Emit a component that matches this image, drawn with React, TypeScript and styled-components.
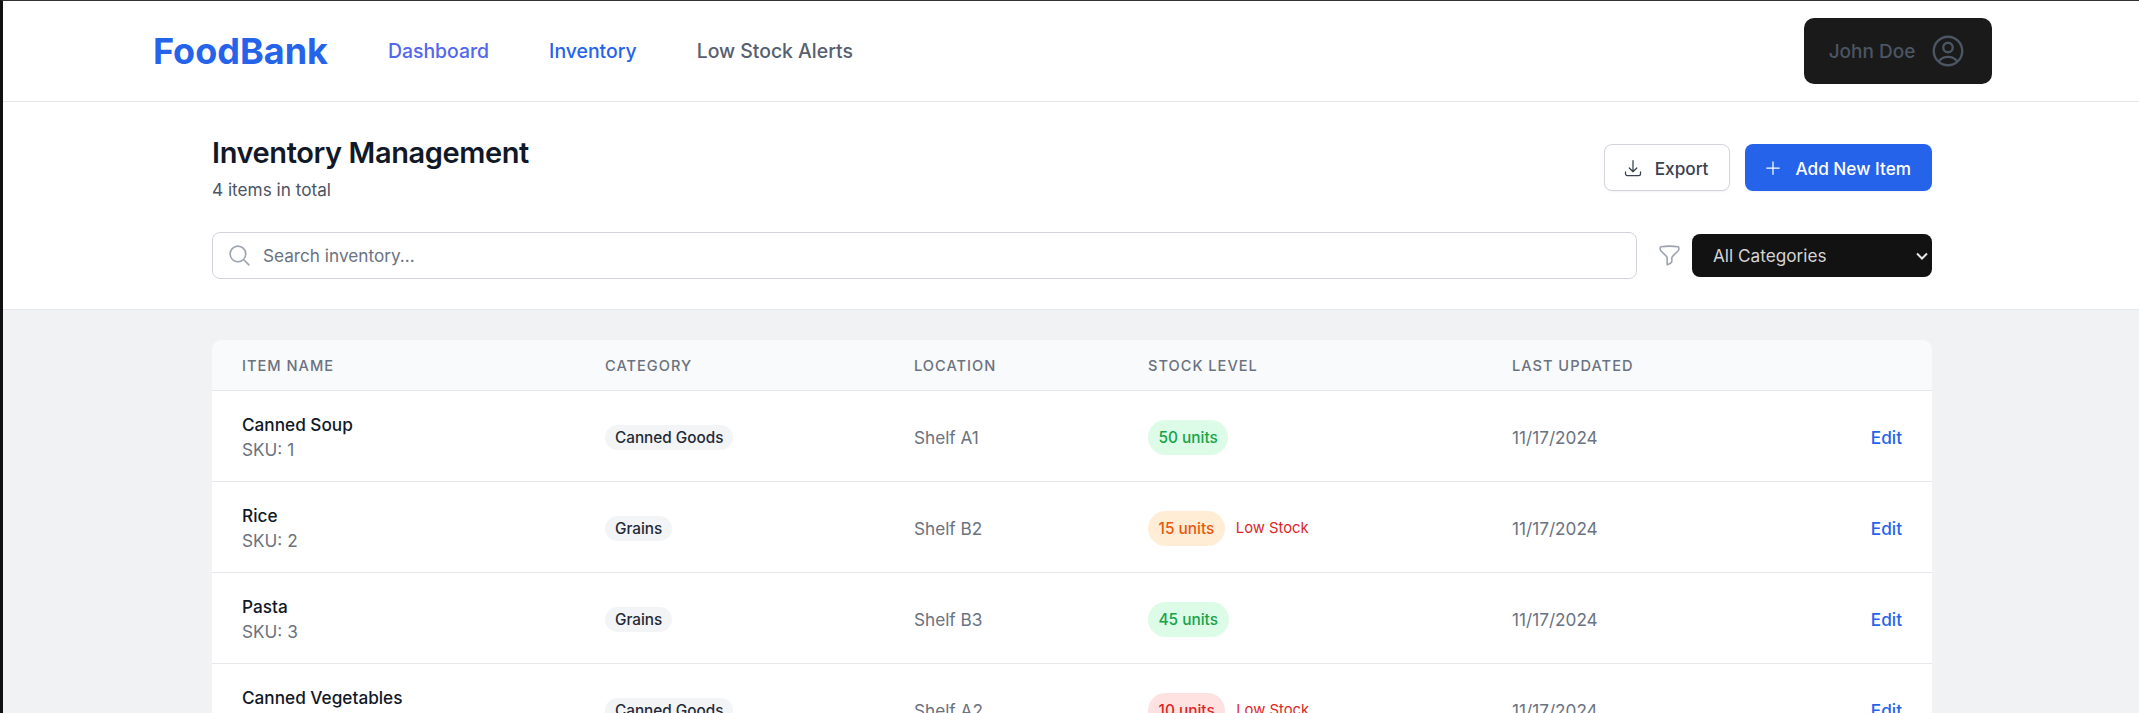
import React from 'react';
import styled, { createGlobalStyle } from 'styled-components';
import {
	HiOutlineArrowDownTray,
	HiOutlineFunnel,
	HiOutlineMagnifyingGlass,
	HiOutlinePlus,
	HiOutlineUserCircle,
} from 'react-icons/hi2';

const GlobalStyle = createGlobalStyle`
	html, body {
		margin: 0;
		height: 100%;
		overflow: hidden;
		background: #f1f2f4;
		font-family: Inter, "Liberation Sans", sans-serif;
	}
	* { box-sizing: border-box; }
`;

const Page = styled.div`
	height: 713px;
	overflow: hidden;
	border-top: 1px solid #333;
	border-left: 3px solid #111;
	background: #f1f2f4;
`;

const NavBar = styled.header`
	height: 101px;
	display: flex;
	align-items: center;
	padding: 0 147px 0 150px;
	background: #fff;
	border-bottom: 1px solid #e5e7eb;
`;

const Logo = styled.div`
	font-size: 36px;
	font-weight: 700;
	color: #2563eb;
	margin-right: 60px;
`;

const NavLinks = styled.nav`
	display: flex;
	gap: 60px;
	flex: 1;
`;

const NavLink = styled.a<{ $tone: string }>`
	font-size: 19.4px;
	font-weight: 500;
	color: ${p => p.$tone};
`;

const UserButton = styled.button`
	width: 188px;
	height: 66px;
	display: flex;
	align-items: center;
	justify-content: center;
	gap: 14px;
	border: none;
	border-radius: 10px;
	background: #1a1a1a;
	color: #4b5563;
	font: 500 19px Inter, sans-serif;
	svg {
		font-size: 38px;
	}
`;

const Toolbar = styled.section`
	height: 208px;
	padding: 34px 207px 0 209px;
	background: #fff;
	border-bottom: 1px solid #e5e7eb;
`;

const TitleRow = styled.div`
	display: flex;
	justify-content: space-between;
	align-items: flex-start;
`;

const Title = styled.h1`
	margin: 0;
	font-size: 29px;
	line-height: 34px;
	font-weight: 600;
	letter-spacing: -0.4px;
	color: #111827;
`;

const Subtitle = styled.p`
	margin: 8px 0 0;
	font-size: 17.2px;
	line-height: 24px;
	color: #4b5563;
`;

const Actions = styled.div`
	display: flex;
	gap: 15px;
	margin-top: 8px;
`;

const ActionButton = styled.button<{ $primary?: boolean }>`
	height: 47px;
	display: flex;
	align-items: center;
	gap: 12px;
	padding: 1px 21px 0 18px;
	border-radius: 8px;
	border: ${p => (p.$primary ? 'none' : '1px solid #d1d5db')};
	background: ${p => (p.$primary ? '#2563eb' : '#fff')};
	color: ${p => (p.$primary ? '#fff' : '#374151')};
	box-shadow: 0 1px 2px rgba(0, 0, 0, 0.05);
	font: 500 17.2px Inter, sans-serif;
	svg {
		font-size: 20px;
	}
`;

const FilterRow = styled.div`
	display: flex;
	align-items: center;
	margin-top: 30px;
`;

const SearchBox = styled.label`
	flex: 1;
	height: 47px;
	display: flex;
	align-items: center;
	gap: 11px;
	padding: 0 14px;
	border: 1px solid #d1d5db;
	border-radius: 8px;
	background: #fff;
	svg {
		font-size: 25px;
		color: #9ca3af;
	}
`;

const SearchInput = styled.input`
	flex: 1;
	padding: 0;
	border: none;
	outline: none;
	background: none;
	font: 400 17.2px Inter, sans-serif;
	&::placeholder {
		color: #6b7280;
		opacity: 1;
	}
`;

const FilterIcon = styled(HiOutlineFunnel)`
	flex: none;
	margin: 0 10px 0 20px;
	font-size: 25px;
	color: #9ca3af;
`;

const SelectWrap = styled.div`
	position: relative;
	width: 240px;
	height: 43px;
`;

const CategorySelect = styled.select`
	appearance: none;
	width: 100%;
	height: 100%;
	padding: 0 21px;
	border: none;
	border-radius: 8px;
	background: #121212;
	color: #d4d4d4;
	font: 400 17.2px Inter, sans-serif;
`;

const SelectChevron = styled.svg`
	position: absolute;
	right: 4px;
	top: 18px;
	width: 12px;
	height: 8px;
	fill: none;
	stroke: #e5e7eb;
	stroke-width: 2;
	pointer-events: none;
`;

const Main = styled.main`
	padding: 30px 207px 0 209px;
`;

const Table = styled.div`
	border-radius: 10px;
	overflow: hidden;
	background: #fff;
`;

const Row = styled.div`
	display: grid;
	grid-template-columns: 363px 309px 234px 364px 1fr;
	align-items: center;
	padding: 2px 30px 0;
	height: 91px;
	border-bottom: 1px solid #e5e7eb;
`;

const HeadRow = styled(Row)`
	height: 51px;
	background: #f9fafb;
`;

const HeadCell = styled.div`
	font-size: 14.6px;
	font-weight: 500;
	letter-spacing: 1px;
	color: #6b7280;
	text-transform: uppercase;
`;

const ItemName = styled.div`
	font-size: 17.2px;
	line-height: 25px;
	font-weight: 500;
	color: #111827;
`;

const ItemSku = styled.div`
	font-size: 17.2px;
	line-height: 25px;
	color: #6b7280;
`;

const CategoryPill = styled.span`
	display: inline-flex;
	align-items: center;
	height: 25px;
	padding: 0 10px;
	border-radius: 13px;
	background: #f3f4f6;
	font-size: 15.3px;
	font-weight: 500;
	color: #1f2937;
`;

const MutedCell = styled.div`
	font-size: 17.2px;
	color: #6b7280;
`;

const StockCell = styled.div`
	display: flex;
	align-items: center;
	gap: 11px;
`;

const StockPill = styled.span<{ $bg: string; $fg: string }>`
	display: inline-flex;
	align-items: center;
	height: 35px;
	padding: 0 10.5px;
	border-radius: 18px;
	background: ${p => p.$bg};
	color: ${p => p.$fg};
	font-size: 15.4px;
	font-weight: 500;
`;

const LowStock = styled.span`
	font-size: 14.8px;
	color: #dc2626;
`;

const UpdatedCell = styled.div`
	display: flex;
	align-items: center;
	justify-content: space-between;
`;

const EditLink = styled.a`
	font-size: 17.2px;
	font-weight: 500;
	color: #2563eb;
`;

const LEVELS = {
	ok: { bg: '#dcfce7', fg: '#16a34a' },
	low: { bg: '#ffedd5', fg: '#ea580c' },
	critical: { bg: '#fee2e2', fg: '#dc2626' },
};

const ITEMS = [
	{ name: 'Canned Soup', sku: 1, category: 'Canned Goods', location: 'Shelf A1', units: 50, level: LEVELS.ok, low: false },
	{ name: 'Rice', sku: 2, category: 'Grains', location: 'Shelf B2', units: 15, level: LEVELS.low, low: true },
	{ name: 'Pasta', sku: 3, category: 'Grains', location: 'Shelf B3', units: 45, level: LEVELS.ok, low: false },
	{ name: 'Canned Vegetables', sku: 4, category: 'Canned Goods', location: 'Shelf A2', units: 10, level: LEVELS.critical, low: true },
];

const App = () => {
	return (
		<Page>
			<GlobalStyle />
			<NavBar>
				<Logo>FoodBank</Logo>
				<NavLinks>
					<NavLink $tone="#5266ee">Dashboard</NavLink>
					<NavLink $tone="#2563eb">Inventory</NavLink>
					<NavLink $tone="#566070">Low Stock Alerts</NavLink>
				</NavLinks>
				<UserButton>
					John Doe
					<HiOutlineUserCircle />
				</UserButton>
			</NavBar>

			<Toolbar>
				<TitleRow>
					<div>
						<Title>Inventory Management</Title>
						<Subtitle>4 items in total</Subtitle>
					</div>
					<Actions>
						<ActionButton>
							<HiOutlineArrowDownTray />
							Export
						</ActionButton>
						<ActionButton $primary>
							<HiOutlinePlus />
							Add New Item
						</ActionButton>
					</Actions>
				</TitleRow>
				<FilterRow>
					<SearchBox>
						<HiOutlineMagnifyingGlass />
						<SearchInput placeholder="Search inventory..." />
					</SearchBox>
					<FilterIcon />
					<SelectWrap>
						<CategorySelect defaultValue="all">
							<option value="all">All Categories</option>
						</CategorySelect>
						<SelectChevron viewBox="0 0 12 8">
							<path d="M1 1.5l5 5 5-5" />
						</SelectChevron>
					</SelectWrap>
				</FilterRow>
			</Toolbar>

			<Main>
				<Table>
					<HeadRow>
						<HeadCell>Item Name</HeadCell>
						<HeadCell>Category</HeadCell>
						<HeadCell>Location</HeadCell>
						<HeadCell>Stock Level</HeadCell>
						<HeadCell>Last Updated</HeadCell>
					</HeadRow>
					{ITEMS.map(item => (
						<Row key={item.sku}>
							<div>
								<ItemName>{item.name}</ItemName>
								<ItemSku>SKU: {item.sku}</ItemSku>
							</div>
							<div>
								<CategoryPill>{item.category}</CategoryPill>
							</div>
							<MutedCell>{item.location}</MutedCell>
							<StockCell>
								<StockPill $bg={item.level.bg} $fg={item.level.fg}>
									{item.units} units
								</StockPill>
								{item.low && <LowStock>Low Stock</LowStock>}
							</StockCell>
							<UpdatedCell>
								<MutedCell>11/17/2024</MutedCell>
								<EditLink>Edit</EditLink>
							</UpdatedCell>
						</Row>
					))}
				</Table>
			</Main>
		</Page>
	);
};

export default App;
